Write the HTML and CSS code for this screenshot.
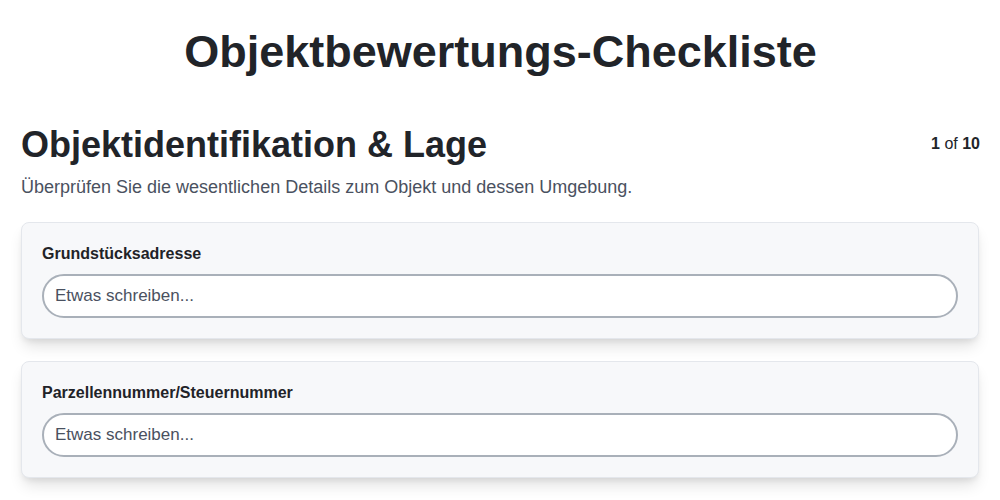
FILE: index.html
```html
<!DOCTYPE html>
<html lang="de">
<head>
<meta charset="utf-8">
<title>Objektbewertungs-Checkliste</title>
<link rel="stylesheet" href="styles.css">
</head>
<body>
<main class="page">
  <h1 class="title">Objektbewertungs-Checkliste</h1>
  <section class="section">
    <div class="section-head">
      <h2 class="section-title">Objektidentifikation &amp; Lage</h2>
      <div class="progress"><b>1</b> of <b>10</b></div>
    </div>
    <p class="section-desc">Überprüfen Sie die wesentlichen Details zum Objekt und dessen Umgebung.</p>
    <div class="cards">
      <div class="card">
        <label class="card-label" for="f1">Grundstücksadresse</label>
        <input class="card-input" id="f1" type="text" placeholder="Etwas schreiben...">
      </div>
      <div class="card">
        <label class="card-label" for="f2">Parzellennummer/Steuernummer</label>
        <input class="card-input" id="f2" type="text" placeholder="Etwas schreiben...">
      </div>
      <div class="card">
        <label class="card-label" for="f3">Grundstücksgröße</label>
        <input class="card-input" id="f3" type="text" placeholder="Etwas schreiben...">
      </div>
    </div>
  </section>
</main>
</body>
</html>
```
FILE: styles.css
```css
* { box-sizing: border-box; }
html, body { margin: 0; background: #ffffff; }
body {
  font-family: "Liberation Sans", Arial, sans-serif;
  color: #1f2328;
}
.page {
  padding: 20px 20px 20px 21px;
}
.title {
  margin: 4px 0 43px;
  text-align: center;
  font-size: 45px;
  line-height: 56px;
  font-weight: 700;
  color: #212429;
}
.section-head {
  display: flex;
  justify-content: space-between;
  align-items: flex-start;
}
.section-title {
  margin: 0;
  font-size: 36px;
  line-height: 44px;
  font-weight: 700;
  color: #212429;
}
.progress {
  font-size: 16px;
  line-height: 24px;
  margin-top: 9px;
  color: #212429;
}
.progress b { font-weight: 700; }
.section-desc {
  margin: 7px 0 22px;
  font-size: 18px;
  line-height: 26px;
  color: #4a5160;
}
.cards {
  display: flex;
  flex-direction: column;
  gap: 22px;
  margin-right: 1px;
}
.card {
  display: flex;
  flex-direction: column;
  gap: 8px;
  padding: 19px 20px 20px;
  background: #f7f8fa;
  border: 1px solid #e4e7ec;
  border-radius: 8px;
  box-shadow: 0 10px 15px -3px rgba(0,0,0,0.12), 0 4px 6px -2px rgba(0,0,0,0.08);
}
.card-label {
  font-size: 16px;
  line-height: 24px;
  font-weight: 700;
  color: #1f2328;
}
.card-input {
  width: 100%;
  height: 44px;
  padding: 0 11px;
  font-family: inherit;
  font-size: 17px;
  color: #1f2328;
  background: #ffffff;
  border: 2px solid #a9b0b9;
  border-radius: 22px;
  outline: none;
}
.card-input::placeholder { color: #4a5160; opacity: 1; }
```
